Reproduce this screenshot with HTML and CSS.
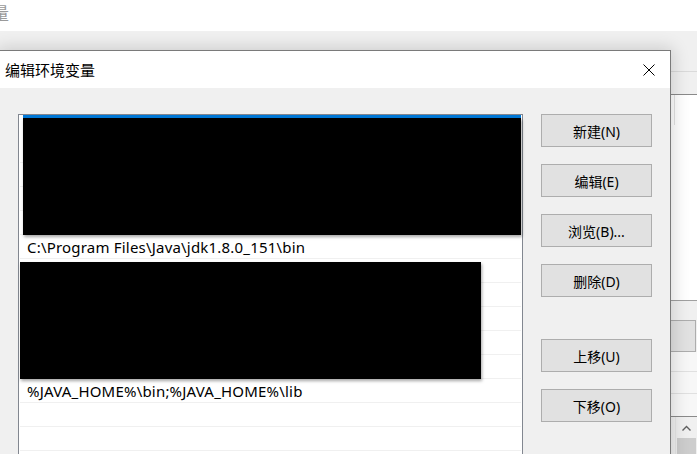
FILE: index.html
```html
<!DOCTYPE html>
<html lang="zh-CN">
  <head>
    <meta charset="UTF-8" />
    <meta name="viewport" content="width=device-width, initial-scale=1.0" />
    <title>编辑环境变量</title>
    <link rel="stylesheet" href="styles.css">
  </head>
  <body>
    <div class="desktop">
      <!-- window behind the dialog -->
      <div class="back-window">
        <div class="back-top"><span class="back-title">量</span></div>
        <div class="back-body">
          <div class="back-spacer"></div>
          <div class="back-side">
            <div class="back-band"></div>
            <div class="back-gap"></div>
            <div class="back-list">
              <div class="back-col"></div>
            </div>
            <div class="back-gap-small"></div>
            <div class="back-button"></div>
            <div class="back-rows">
              <div class="back-row"></div>
              <div class="back-row"></div>
            </div>
            <div class="back-scroll">
              <div class="scroll-arrow">
                <svg width="9" height="6" viewBox="0 0 9 6"><path d="M0.5 5.5 L4.5 1.5 L8.5 5.5" fill="none" stroke="#606060" stroke-width="1.4"/></svg>
              </div>
              <div class="scroll-thumb"></div>
            </div>
          </div>
        </div>
      </div>

      <div class="dialog">
        <div class="title-bar">
          <div class="title">编辑环境变量</div>
          <div class="close">
            <svg width="12" height="12" viewBox="0 0 12 12"><path d="M0.5 0.5 L11.5 11.5 M11.5 0.5 L0.5 11.5" stroke="#000" stroke-width="1"/></svg>
          </div>
        </div>
        <div class="dialog-body">
          <div class="path-list">
            <div class="row selected"></div>
            <div class="row"></div>
            <div class="row"></div>
            <div class="row"></div>
            <div class="row"></div>
            <div class="row">C:\Program Files\Java\jdk1.8.0_151\bin</div>
            <div class="row"></div>
            <div class="row"></div>
            <div class="row"></div>
            <div class="row"></div>
            <div class="row"></div>
            <div class="row">%JAVA_HOME%\bin;%JAVA_HOME%\lib</div>
            <div class="row"></div>
            <div class="row"></div>
            <div class="row"></div>
            <div class="redact redact-one"></div>
            <div class="redact redact-two"></div>
          </div>
          <div class="buttons">
            <div class="btn">新建(N)</div>
            <div class="btn">编辑(E)</div>
            <div class="btn">浏览(B)...</div>
            <div class="btn">删除(D)</div>
            <div class="btn btn-move">上移(U)</div>
            <div class="btn">下移(O)</div>
          </div>
        </div>
      </div>
    </div>
  </body>
</html>
```

FILE: styles.css
```css
* {
  margin: 0;
  padding: 0;
  box-sizing: border-box;
}

body {
  overflow: hidden;
  height: 100vh;
  background-color: #fff;
  font-family: "Noto Sans", "Noto Sans CJK SC", sans-serif;
  font-size: 14px;
  color: #000;
}

.desktop {
  position: relative;
  height: 100vh;
  overflow: hidden;
}

/* back window */
.back-window {
  display: flex;
  flex-direction: column;
  height: 100%;
}

.back-top {
  height: 31px;
  background-color: #fff;
  overflow: hidden;
}

.back-title {
  display: inline-block;
  margin-left: -8px;
  margin-top: 2px;
  font-family: "Noto Sans CJK SC", sans-serif;
  font-size: 17px;
  line-height: 22px;
  color: #9a9a9a;
}

.back-body {
  flex: 1;
  display: flex;
  background-color: #f0f0f0;
}

.back-spacer {
  flex: 0 0 670px;
}

.back-side {
  flex: 1;
  display: flex;
  flex-direction: column;
}

.back-band {
  height: 41px;
  border-bottom: 1px solid #dadada;
}

.back-gap {
  height: 22px;
}

.back-list {
  height: 207px;
  background-color: #fff;
  border-top: 1px solid #8a8a8a;
  border-bottom: 1px solid #a0a0a0;
}

.back-col {
  width: 5px;
  height: 30px;
  border-right: 1px solid #e3e3e3;
}

.back-gap-small {
  height: 19px;
}

.back-button {
  height: 32px;
  margin-right: 1px;
  background-color: #e1e1e1;
  border: 1px solid #adadad;
}

.back-rows {
  height: 65px;
  padding-top: 19px;
  background-color: #f7f7f7;
  border-bottom: 1px solid #8a8a8a;
}

.back-row {
  height: 22px;
  border-top: 1px solid #e0e0e0;
}

.back-scroll {
  flex: 1;
  margin-left: 5px;
  padding: 0 1px;
  background-color: #f0f0f0;
  border-left: 1px solid #e6e6e6;
  display: flex;
  flex-direction: column;
  align-items: center;
}

.scroll-arrow {
  height: 21px;
  display: flex;
  align-items: center;
  justify-content: center;
  padding-top: 1px;
}

.scroll-thumb {
  width: 19px;
  flex: 1;
  background-color: #cdcdcd;
}

/* dialog */
.dialog {
  position: absolute;
  left: -1px;
  top: 50px;
  width: 672px;
  height: 430px;
  background-color: #f0f0f0;
  border: 1px solid #7a7a7a;
  box-shadow: 0 0 16px 2px rgba(0, 0, 0, 0.16);
}

.title-bar {
  height: 37px;
  background-color: #fff;
  display: flex;
  align-items: center;
  justify-content: space-between;
  padding: 0 15px 0 5px;
}

.title {
  font-family: "Noto Sans CJK SC", sans-serif;
  font-size: 15px;
  line-height: 20px;
}

.close {
  width: 12px;
  height: 12px;
  display: flex;
}

.dialog-body {
  display: flex;
  align-items: flex-start;
  gap: 18px;
  padding: 26px 0 0 18px;
}

.path-list {
  position: relative;
  width: 505px;
  height: 400px;
  background-color: #fff;
  border: 1px solid #828790;
  padding: 0 1px;
}

.row {
  height: 24px;
  padding-left: 7px;
  border-bottom: 1px solid #f0f0f0;
  font-size: 15px;
  letter-spacing: 0.2px;
  line-height: 24px;
  white-space: nowrap;
}

.row.selected {
  margin-left: 3px;
  background-color: #0078d7;
}

.redact {
  position: absolute;
  background-color: #000;
  box-shadow: 1px 2px 3px rgba(0, 0, 0, 0.35);
}

.redact-one {
  left: 4px;
  top: 3px;
  width: 498px;
  height: 117px;
}

.redact-two {
  left: 1px;
  top: 147px;
  width: 461px;
  height: 117px;
}

.buttons {
  display: flex;
  flex-direction: column;
  gap: 17px;
}

.btn {
  width: 111px;
  height: 33px;
  background-color: #e1e1e1;
  border: 1px solid #adadad;
  display: flex;
  align-items: center;
  justify-content: center;
  font-family: "Noto Sans", "Noto Sans CJK SC", sans-serif;
  font-size: 14px;
}

.btn-move {
  margin-top: 25px;
}
```
